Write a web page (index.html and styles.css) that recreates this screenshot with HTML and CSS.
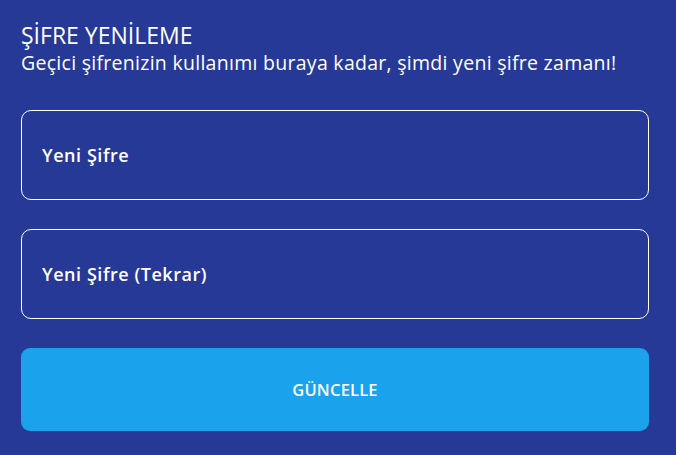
FILE: index.html
```html
<!DOCTYPE html>
<html lang="tr">
<head>
<meta charset="utf-8">
<link rel="stylesheet" href="styles.css">
</head>
<body>
<main class="panel">
  <h1 class="title">ŞİFRE YENİLEME</h1>
  <p class="subtitle">Geçici şifrenizin kullanımı buraya kadar, şimdi yeni şifre zamanı!</p>
  <form class="form">
    <input class="field" type="password" placeholder="Yeni Şifre">
    <input class="field" type="password" placeholder="Yeni Şifre (Tekrar)">
    <button class="submit" type="button">GÜNCELLE</button>
  </form>
</main>
</body>
</html>
```
FILE: styles.css
```css
html, body {
  margin: 0;
  padding: 0;
  background: #263997;
  height: 100%;
}
body {
  font-family: "Open Sans", "Noto Sans", sans-serif;
  color: #fff;
}
.panel {
  padding: 20px 27px 0 21px;
}
.title {
  margin: 0;
  font-size: 23px;
  font-weight: 400;
  line-height: 30px;
  letter-spacing: 0;
}
.subtitle {
  margin: 0;
  font-size: 19.5px;
  line-height: 26px;
  letter-spacing: 0.28px;
}
.form {
  margin-top: 34px;
  display: flex;
  flex-direction: column;
  gap: 29px;
}
.field {
  box-sizing: border-box;
  height: 90px;
  border: 1px solid #fff;
  border-radius: 10px;
  background: transparent;
  padding: 0 20px;
  font-family: inherit;
  font-size: 18px;
  font-weight: 600;
  letter-spacing: 0.55px;
  color: #fff;
  outline: none;
}
.field::placeholder {
  color: #fff;
  opacity: 1;
}
.submit {
  height: 83px;
  border: none;
  border-radius: 9px;
  background: #1ba2ec;
  color: #fff;
  font-family: inherit;
  font-size: 16.5px;
  font-weight: 600;
  letter-spacing: 0.2px;
}
```
